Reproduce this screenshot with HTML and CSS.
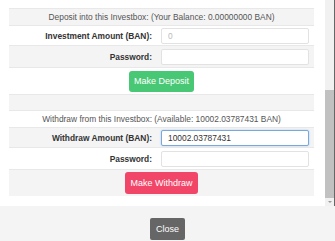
FILE: index.html
```html
<!DOCTYPE html>
<html lang="en">

<head>
    <meta charset="UTF-8">
    <meta name="viewport" content="width=device-width, initial-scale=1.0">
    <title>Investbox</title>
    <link rel="stylesheet" href="styles.css">
</head>

<body>
    <div class="modal">
        <div class="modal-main">
            <div class="modal-body">
                <div class="form-rows">
                    <div class="row title">Deposit into this Investbox: (Your Balance: 0.00000000 BAN)</div>
                    <div class="row field">
                        <label class="label">Investment Amount (BAN):</label>
                        <div class="control"><input class="input" type="text" placeholder="0"></div>
                    </div>
                    <div class="row field tall">
                        <label class="label">Password:</label>
                        <div class="control"><input class="input" type="password"></div>
                    </div>
                    <div class="row action">
                        <button class="btn btn-success">Make Deposit</button>
                    </div>
                    <div class="row spacer"></div>
                    <div class="row title">Withdraw from this Investbox: (Available: 10002.03787431 BAN)</div>
                    <div class="row field">
                        <label class="label">Withdraw Amount (BAN):</label>
                        <div class="control"><input class="input focused" type="text" value="10002.03787431"></div>
                    </div>
                    <div class="row field tall">
                        <label class="label">Password:</label>
                        <div class="control"><input class="input" type="password"></div>
                    </div>
                    <div class="row action">
                        <button class="btn btn-danger">Make Withdraw</button>
                    </div>
                </div>
            </div>
            <div class="scrollbar">
                <div class="thumb"></div>
                <div class="arrow"></div>
            </div>
        </div>
        <div class="modal-footer">
            <button class="btn btn-close">Close</button>
        </div>
    </div>
</body>

</html>
```

FILE: styles.css
```css
* {
    margin: 0;
    padding: 0;
    box-sizing: border-box;
}

body {
    font-family: "Liberation Sans", Arial, sans-serif;
    font-size: 8.4px;
    color: #333;
    background-color: #fff;
}

.modal {
    width: 335px;
    height: 241px;
    display: flex;
    flex-direction: column;
    overflow: hidden;
}

.modal-main {
    height: 206px;
    display: flex;
}

.modal-body {
    flex: 1;
    padding: 8px 11px 0 9px;
}

.form-rows {
    display: flex;
    flex-direction: column;
}

.row {
    display: flex;
    align-items: center;
    border-top: 1px solid #e8e8e8;
}

.row:nth-child(odd) {
    background-color: #f4f4f4;
}

.title {
    height: 17px;
    justify-content: center;
    color: #555;
}

.field {
    height: 20px;
}

.field.tall {
    height: 22px;
}

.action {
    height: 27px;
    justify-content: center;
}

.spacer {
    height: 16px;
}

.label {
    width: 152px;
    padding-right: 9px;
    text-align: right;
    font-weight: bold;
}

.control {
    flex: 1;
    padding-right: 5px;
}

.input {
    display: block;
    width: 148px;
    height: 16px;
    padding: 0 6px;
    border: 1px solid #e2e2e2;
    border-radius: 2px;
    font-family: inherit;
    font-size: 8.4px;
    color: #333;
    background-color: #fff;
    outline: none;
}

.input::placeholder {
    color: #bbb;
}

.input.focused {
    border-color: #7aa7dc;
    box-shadow: 0 0 2px rgba(102, 175, 233, 0.6);
}

.btn {
    border: none;
    border-radius: 3px;
    color: #fff;
    font-family: inherit;
    font-size: 9px;
    line-height: 11px;
    padding: 0 5px;
    white-space: nowrap;
    cursor: pointer;
}

.btn-success {
    background-color: #48c774;
    height: 21px;
}

.btn-danger {
    background-color: #f14668;
    height: 22px;
}

.scrollbar {
    width: 10px;
    display: flex;
    flex-direction: column;
    background-color: #f1f1f1;
    border-right: 1px solid #666;
}

.thumb {
    margin-top: 90px;
    height: 108px;
    background-color: #c1c1c1;
}

.arrow {
    margin: 3px auto 0;
    width: 0;
    height: 0;
    border-left: 2px solid transparent;
    border-right: 2px solid transparent;
    border-top: 2px solid #999;
}

.modal-footer {
    flex: 1;
    background-color: #f4f4f4;
    padding-top: 12px;
    text-align: center;
}

.btn-close {
    background-color: #666;
    height: 22px;
    padding: 0 6px;
    border-radius: 2px;
}
```
